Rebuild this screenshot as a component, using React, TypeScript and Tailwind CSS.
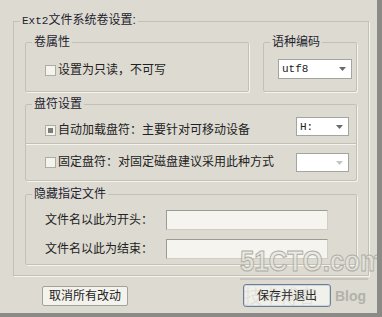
import React from 'react';

const Group: React.FC<{ title: React.ReactNode; className?: string; children?: React.ReactNode }> = ({
  title,
  className,
  children,
}) => (
  <fieldset className={`border border-[#c3c1b5] rounded-[2px] shadow-[1px_1px_0_#f4f3ee] ${className ?? ''}`}>
    <legend className="ml-[6px] px-[2px] text-[12px] leading-[13px] text-[#1d2230]">{title}</legend>
    {children}
  </fieldset>
);

const Check: React.FC<{ checked?: boolean }> = ({ checked }) => (
  <span className="w-[11px] h-[11px] border border-[#aeada4] bg-[#f4f3ee] flex items-center justify-center shrink-0">
    {checked && <span className="w-[5px] h-[5px] bg-[#7c7c78]" />}
  </span>
);

const Select: React.FC<{ value?: string; disabled?: boolean; className?: string }> = ({ value, disabled, className }) => (
  <div
    className={`flex items-center justify-between bg-white border border-[#a5a59f] pl-[3px] pr-[5px] ${className ?? ''}`}
  >
    <span className="font-['Liberation_Mono',monospace] text-[11px] leading-[12px] text-[#222]">{value}</span>
    <svg width="7" height="4" viewBox="0 0 7 4">
      <path d="M0 0h7L3.5 4z" fill={disabled ? '#c4c4c0' : '#6a6a6a'} />
    </svg>
  </div>
);

const TextBox: React.FC = () => (
  <div className="w-[162px] h-[20px] bg-[#f5f4ee] border border-t-[#9c9b93] border-l-[#9c9b93] border-r-[#cfcdc4] border-b-[#cfcdc4]" />
);

export default function App() {
  return (
    <div className="relative w-[382px] h-[317px] overflow-hidden bg-[#dddbd1] border-r-[5px] border-b-[4px] border-[#8b8a86] font-['Liberation_Sans','Noto_Sans_CJK_SC',sans-serif] text-[12px] leading-[14px] text-[#222]">
      <fieldset className="ml-[13px] mt-[14px] w-[356px] h-[262px] border border-[#c3c1b5] shadow-[1px_1px_0_#f4f3ee]">
        <legend className="ml-[6px] px-[2px] text-[12px] leading-[13px] text-[#1d2230]">
          <span className="font-['Liberation_Mono',monospace] text-[11px]">Ext2</span>文件系统卷设置:
        </legend>
        <div className="pl-[11px] pt-[8px] flex flex-col">
          <div className="flex gap-[14px]">
            <Group title="卷属性" className="w-[224px] h-[56px]">
              <div className="pl-[19px] pt-[14px] flex items-center gap-[2px]">
                <Check />
                <span>设置为只读，不可写</span>
              </div>
            </Group>
            <Group title="语种编码" className="w-[94px] h-[56px]">
              <div className="pl-[14px] pt-[10px]">
                <Select value="utf8" className="w-[74px] h-[20px]" />
              </div>
            </Group>
          </div>

          <Group title="盘符设置" className="mt-[6px] w-[332px] h-[83px]">
            <div className="h-[33px] flex items-start pl-[19px] pr-[7px] border-b border-[#c3c1b5]">
              <div className="mt-[12px] flex items-center gap-[2px]">
                <Check checked />
                <span>自动加载盘符：主要针对可移动设备</span>
              </div>
              <Select value="H:" className="ml-auto mt-[6px] w-[53px] h-[19px]" />
            </div>
            <div className="h-[35px] flex items-start pl-[19px] pr-[7px] border-t border-[#f4f3ee]">
              <div className="mt-[10px] flex items-center gap-[2px]">
                <Check />
                <span>固定盘符：对固定磁盘建议采用此种方式</span>
              </div>
              <Select disabled className="ml-auto mt-[8px] w-[53px] h-[19px]" />
            </div>
          </Group>

          <Group title="隐藏指定文件" className="mt-[7px] w-[332px] h-[77px]">
            <div className="pl-[19px] pt-[9px] flex flex-col gap-[9px]">
              <div className="flex items-center">
                <span className="w-[121px]">文件名以此为开头：</span>
                <TextBox />
              </div>
              <div className="flex items-center">
                <span className="w-[121px]">文件名以此为结束：</span>
                <TextBox />
              </div>
            </div>
          </Group>
        </div>
      </fieldset>

      <div className="mt-[8px] h-[23px] flex items-center pl-[42px]">
        <button className="w-[86px] h-[20px] border border-[#a3a29a] rounded-[2px] bg-[#f3f2ec] text-[12px] leading-[14px] text-[#222]">
          取消所有改动
        </button>
        <button className="ml-[115px] w-[88px] h-[23px] border border-[#6f7f8e] rounded-[3px] bg-[#f1f0ea] shadow-[inset_0_0_0_1px_#c9d6e6] text-[12px] leading-[14px] text-[#222]">
          保存并退出
        </button>
      </div>

      {/* watermark */}
      <div className="absolute left-[240px] top-[245px] w-[130px] pointer-events-none select-none">
        <div className="origin-left scale-x-[0.86] whitespace-nowrap font-['Liberation_Sans',sans-serif] font-bold text-[30px] leading-[32px] text-[#e6e5de]/70 [-webkit-text-stroke:1px_#aeada5]">
          51CTO.com
        </div>
        <div className="mt-[1px] w-[128px] border-t-2 border-[#c6c5bd]" />
        <div className="mt-[8px] flex justify-end pr-[4px]">
          <span className="font-bold text-[14px] leading-[16px] text-[#b2b1aa]">Blog</span>
        </div>
      </div>
      <span className="absolute left-[244px] top-[287px] pointer-events-none select-none text-[18px] leading-[20px] text-[#b4b3ab]/25">
        技术博客
      </span>
    </div>
  );
}
